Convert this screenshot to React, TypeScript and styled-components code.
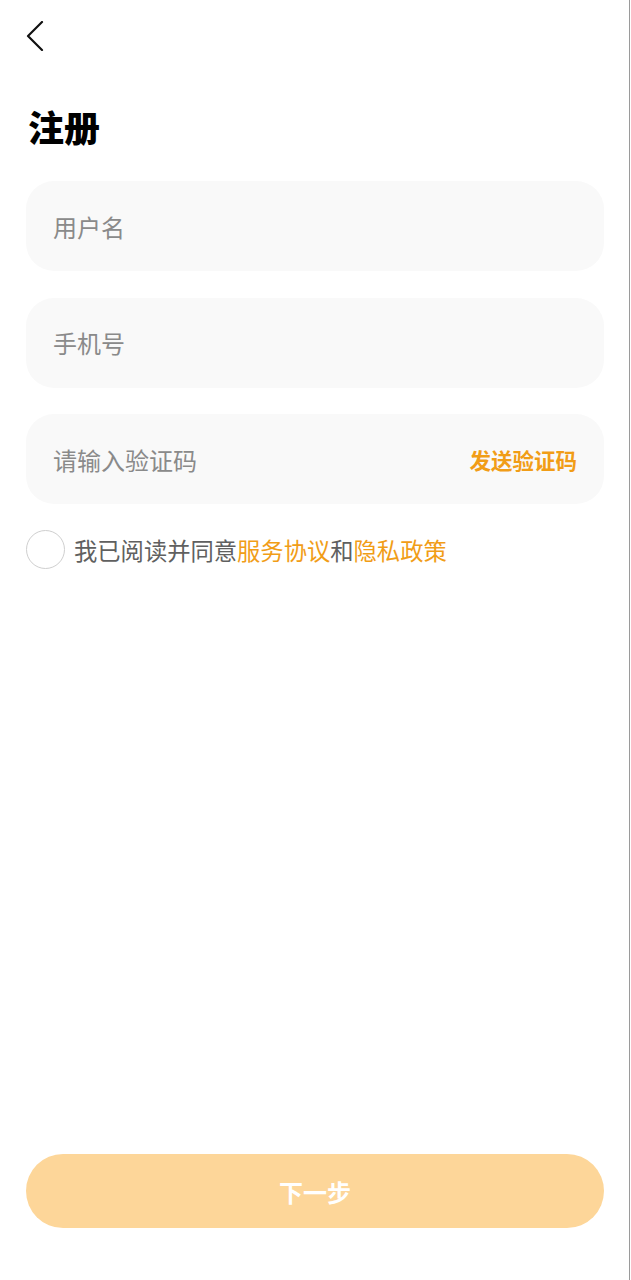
import React, { useState } from "react";
import styled, { createGlobalStyle } from "styled-components";

const GlobalStyle = createGlobalStyle`
  html, body {
    margin: 0;
    padding: 0;
    background: #ffffff;
  }
  body {
    font-family: "Noto Sans CJK SC", "Noto Sans", "Liberation Sans", sans-serif;
  }
`;

const Page = styled.div`
  box-sizing: border-box;
  width: 630px;
  min-height: 1280px;
  border-right: 1px solid #9a9a9a;
  padding: 0 25px 52px 26px;
  display: flex;
  flex-direction: column;
`;

const BackButton = styled.button`
  width: 30px;
  height: 40px;
  margin-top: 16px;
  padding: 0;
  border: none;
  background: none;
  display: flex;
  align-items: center;
  cursor: pointer;
`;

const Title = styled.h1`
  margin: 46px 0 0 2px;
  font-size: 36px;
  line-height: 48px;
  font-weight: 900;
  color: #000;
`;

const Fields = styled.div`
  margin-top: 31px;
  display: flex;
  flex-direction: column;
  gap: 26.5px;
`;

const Field = styled.div`
  height: 90px;
  border-radius: 28px;
  background: #f9f9f9;
  display: flex;
  align-items: center;
  padding: 0 27px;
`;

const Input = styled.input`
  flex: 1;
  min-width: 0;
  border: none;
  outline: none;
  background: transparent;
  font-family: inherit;
  font-size: 24px;
  color: #333;
  padding: 0;
  &::placeholder {
    color: #8a8a8a;
  }
`;

const SendCode = styled.button`
  border: none;
  background: none;
  padding: 0;
  font-family: inherit;
  font-size: 21.5px;
  font-weight: 700;
  color: #f19d17;
  cursor: pointer;
`;

const Agreement = styled.label`
  margin-top: 26px;
  display: flex;
  align-items: center;
  gap: 9px;
  font-size: 23.3px;
  color: #606060;
  cursor: pointer;
`;

const Check = styled.span<{ checked: boolean }>`
  box-sizing: border-box;
  width: 39px;
  height: 39px;
  border-radius: 50%;
  border: 1px solid ${({ checked }) => (checked ? "#f19d17" : "#cfcfcf")};
  background: ${({ checked }) => (checked ? "#f19d17" : "#fff")};
`;

const Link = styled.span`
  color: #f19d17;
`;

const Spacer = styled.div`
  flex: 1;
`;

const NextButton = styled.button`
  height: 74px;
  border: none;
  border-radius: 37px;
  background: #fdd699;
  color: #fff;
  font-family: inherit;
  font-size: 24px;
  font-weight: 700;
  cursor: pointer;
`;

export default function App() {
  const [agreed, setAgreed] = useState(false);

  return (
    <>
      <GlobalStyle />
      <Page>
        <BackButton aria-label="back">
          <svg width="20" height="30" viewBox="0 0 20 30">
            <path
              d="M16 1 L2 15 L16 29"
              fill="none"
              stroke="#111"
              strokeWidth="2.2"
              strokeLinecap="round"
              strokeLinejoin="round"
            />
          </svg>
        </BackButton>
        <Title>注册</Title>
        <Fields>
          <Field>
            <Input placeholder="用户名" />
          </Field>
          <Field>
            <Input placeholder="手机号" />
          </Field>
          <Field>
            <Input placeholder="请输入验证码" />
            <SendCode>发送验证码</SendCode>
          </Field>
        </Fields>
        <Agreement onClick={() => setAgreed(!agreed)}>
          <Check checked={agreed} />
          <span>
            我已阅读并同意<Link>服务协议</Link>和<Link>隐私政策</Link>
          </span>
        </Agreement>
        <Spacer />
        <NextButton>下一步</NextButton>
      </Page>
    </>
  );
}
